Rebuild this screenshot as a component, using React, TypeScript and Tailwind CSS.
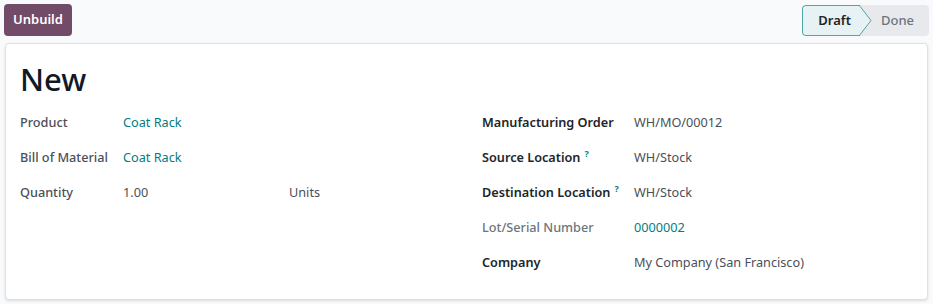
import React from "react";

const font = { fontFamily: '"Noto Sans", "Open Sans", sans-serif' };

function Row({ label, children, help = false, muted = false }: { label: string; children?: React.ReactNode; help?: boolean; muted?: boolean }) {
  return (
    <div className="flex h-[35px] items-center">
      <div className={`w-[152px] shrink-0 ${muted ? "font-medium text-[#6c757d]" : "font-semibold text-[#212529]"}`}>
        {label}
        {help && <sup className="ml-[4px] text-[9px] font-bold text-[#017e84]">?</sup>}
      </div>
      <div className="text-[#4b5058]">{children}</div>
    </div>
  );
}

export default function App() {
  return (
    <div className="min-h-screen bg-[#f9fafb] text-[12.7px]" style={font}>
      {/* control bar */}
      <div className="flex h-[43px] items-start justify-between px-1 pt-1">
        <button className="h-8 rounded-[4px] bg-[#714b67] px-[9px] text-[13px] font-semibold text-white">Unbuild</button>
        <div className="mt-px flex h-[31px] items-stretch overflow-hidden rounded-[4px] bg-[#e7e9ed] text-[13px] font-semibold">
          <div className="relative flex items-center rounded-l-[4px] border border-r-0 border-[#4fa5a9] bg-[#e6f2f3] pl-[15px] pr-[9px] text-[#212529]">
            Draft
            <svg className="absolute -right-[12px] top-[-1px]" width="13" height="31" viewBox="0 0 13 31">
              <path d="M0 0 L12 15.5 L0 31 Z" fill="#e6f2f3" />
              <path d="M0 0 L12 15.5 L0 31" fill="none" stroke="#4fa5a9" strokeWidth="1" />
            </svg>
          </div>
          <div className="flex items-center pl-[21px] pr-[15px] font-medium text-[#6c757d]">Done</div>
        </div>
      </div>

      {/* sheet */}
      <div className="mx-[5px] h-[257px] rounded-[4px] border border-[#dee2e6] bg-white pl-[14px] pr-[15px] pt-[13px] shadow-sm">
        <h1 className="mb-[4px] text-[31px] font-medium leading-[44px] text-[#111827]">New</h1>
        <div className="grid grid-cols-2">
          <div>
            <div className="flex h-[35px] items-center">
              <div className="w-[103px] shrink-0 font-medium text-[#4b5058]">Product</div>
              <div className="text-[#017e84]">Coat Rack</div>
            </div>
            <div className="flex h-[35px] items-center">
              <div className="w-[103px] shrink-0 font-medium text-[#4b5058]">Bill of Material</div>
              <div className="text-[#017e84]">Coat Rack</div>
            </div>
            <div className="flex h-[35px] items-center">
              <div className="w-[103px] shrink-0 font-medium text-[#4b5058]">Quantity</div>
              <div className="w-[166px] text-[#4b5058]">1.00</div>
              <div className="text-[#4b5058]">Units</div>
            </div>
          </div>
          <div className="pl-[16px]">
            <Row label="Manufacturing Order">WH/MO/00012</Row>
            <Row label="Source Location" help>WH/Stock</Row>
            <Row label="Destination Location" help>WH/Stock</Row>
            <Row label="Lot/Serial Number" muted>
              <span className="text-[#017e84]">0000002</span>
            </Row>
            <Row label="Company">My Company (San Francisco)</Row>
          </div>
        </div>
      </div>
    </div>
  );
}
